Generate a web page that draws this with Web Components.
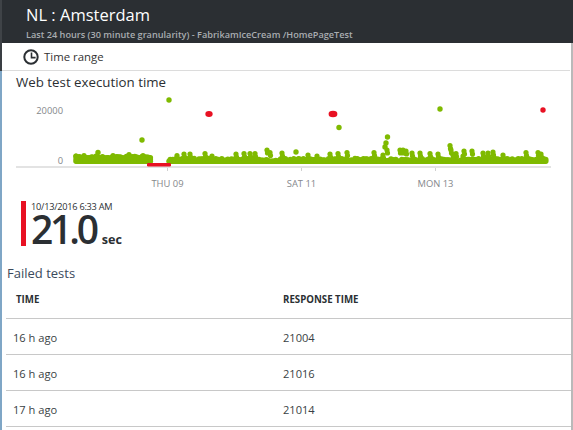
<!DOCTYPE html>
<html>
<head>
<meta charset="utf-8">
<style>
  html, body { margin: 0; height: 100%; overflow: hidden; background: #fff; }
  body { font-family: "Open Sans", "Noto Sans", sans-serif; color: #2b2f33; }
</style>
</head>
<body>
<test-blade>
  <blade-header slot="head" title-text="NL : Amsterdam" sub-text="Last 24 hours (30 minute granularity) - FabrikamIceCream /HomePageTest"></blade-header>
  <command-bar slot="bar" label="Time range"></command-bar>
  <execution-chart heading="Web test execution time"></execution-chart>
  <big-metric stamp="10/13/2016 6:33 AM" value="21.0" unit="sec"></big-metric>
  <failed-tests heading="Failed tests">
    <failed-row when="16 h ago" ms="21004"></failed-row>
    <failed-row when="16 h ago" ms="21016"></failed-row>
    <failed-row when="17 h ago" ms="21014"></failed-row>
  </failed-tests>
</test-blade>
<script>
(function () {
  'use strict';

  // small helper, every component sets its shadow markup once
  class Base extends HTMLElement {
    constructor() {
      super();
      this.attachShadow({ mode: 'open' });
    }
    a(name) { return this.getAttribute(name) || ''; }
  }

  class TestBlade extends Base {
    connectedCallback() {
      this.shadowRoot.innerHTML = `
        <style>
          :host { display: block; width: 573px; height: 430px; overflow: hidden; background: #fff; }
          .body { border-right: 2px solid #b9b9b9; height: 387px; overflow: hidden; }
          .rest { border-left: 2px solid #7fa6c6; height: 359px; overflow: hidden; }
        </style>
        <slot name="head"></slot>
        <div class="body">
          <slot name="bar"></slot>
          <div class="rest"><slot></slot></div>
        </div>`;
    }
  }

  class BladeHeader extends Base {
    connectedCallback() {
      this.shadowRoot.innerHTML = `
        <style>
          :host { display: flex; flex-direction: column; height: 43px; box-sizing: border-box; background: #2b2f33; border-left: 2px solid #3f4347; padding: 3px 0 0 24px; color: #fff; }
          .t { font-size: 16.5px; line-height: 24px; }
          .s { font-size: 9.17px; line-height: 13px; margin-top: 1px; font-weight: 600; color: #a9adb1; white-space: nowrap; }
        </style>
        <div class="t">${this.a('title-text')}</div>
        <div class="s">${this.a('sub-text')}</div>`;
    }
  }

  class CommandBar extends Base {
    connectedCallback() {
      this.shadowRoot.innerHTML = `
        <style>
          :host { display: flex; align-items: center; gap: 5px; height: 28px; box-sizing: border-box; margin-right: 1px; padding: 0 0 1px 21px; background: #fff; border-left: 2px solid #3a3f44; font-size: 11.4px; color: #333; position: relative; }
          :host::after { content: ""; position: absolute; left: 0; right: 0; bottom: 0; height: 1px; background: #dcdcdc; }
          svg { display: block; }
        </style>
        <svg width="16" height="16" viewBox="0 0 16 16">
          <circle cx="8" cy="8" r="6.7" fill="none" stroke="#2b2f33" stroke-width="2"/>
          <path d="M8.5 3.6V8.6H12.6" fill="none" stroke="#2b2f33" stroke-width="1.6"/>
        </svg>
        <span>${this.a('label')}</span>`;
    }
  }

  class ExecutionChart extends Base {
    connectedCallback() {
      this.shadowRoot.innerHTML = `
        <style>
          :host { display: block; height: 130px; }
          .h { font-size: 13.3px; line-height: 20px; padding: 1px 0 0 14px; height: 18px; color: #2b2f33; white-space: nowrap; }
          svg { display: block; }
          text { font-family: "Open Sans", "Noto Sans", sans-serif; font-size: 9.4px; fill: #85888c; }
        </style>
        <div class="h">${this.a('heading')}</div>
        <svg width="569" height="111" viewBox="2 90 569 111"></svg>`;
      this.draw(this.shadowRoot.querySelector('svg'));
    }

    draw(svg) {
      var GREEN = '#7fba00', RED = '#e81123';
      var out = '';
      var dot = function (x, y, r, c) {
        out += '<circle cx="' + x.toFixed(1) + '" cy="' + y.toFixed(1) + '" r="' + r + '" fill="' + (c || GREEN) + '"/>';
      };
      // fixed seed so the cloud is always the same
      var seed = 7;
      var rnd = function () {
        seed = (seed * 16807) % 2147483647;
        return seed / 2147483647;
      };
      var x;
      // left block is taller than the rest
      for (x = 76; x < 151; x += 1.2) {
        dot(x, 161.3, 2.7);
        dot(x, 159, 2.7);
        dot(x, 156.3 + rnd() * 2.4, 2.7);
      }
      for (x = 169; x < 546; x += 1.2) {
        dot(x, 161.3, 2.7);
        if (rnd() > 0.25) dot(x, 158.5 + rnd() * 2, 2.7);
      }
      // bumps on top of the cloud, read off the reference
      [[76, 156], [84, 155.5], [113, 155.5], [129, 154.5], [143, 155.5], [177, 155.5], [184, 154], [190, 154],
       [205, 153.5], [212, 156], [236, 154], [244, 153.5], [250, 153.5], [255, 153.5], [267, 150], [270, 152.5], [282, 153],
       [308, 155], [317, 156], [330, 154], [338, 153.5], [347, 152.5], [374, 152.5], [387, 150], [383, 155], [400, 150],
       [403, 150], [406, 151], [412, 153], [420, 153], [430, 153.5], [438, 154], [456, 153.5], [450, 145.5], [451, 150],
       [453, 155], [464, 151], [463, 156], [472, 151], [483, 153], [493, 152], [488, 153], [503, 155], [526, 152.5], [538, 152.5],
       [541, 154], [96, 156]].forEach(function (p) {
        dot(p[0], p[1], 2.6);
        dot(p[0] + 0.5, p[1] + 3, 2.6);
      });
      // outliers
      [[169, 100], [142, 140], [98, 152.5], [296, 152], [339, 127.5], [440, 109], [387.5, 137], [386, 143], [385, 147]].forEach(function (p) {
        dot(p[0], p[1], 2.7);
      });

      var axis =
        '<rect x="16" y="166" width="535" height="2" fill="#e3e3e3"/>' +
        '<rect x="167" y="168" width="1" height="3" fill="#d0d0d0"/>' +
        '<rect x="301" y="168" width="1" height="3" fill="#d0d0d0"/>' +
        '<rect x="435" y="168" width="1" height="3" fill="#d0d0d0"/>';

      var failed =
        '<rect x="147" y="163" width="24" height="3.4" rx="1.2" fill="' + RED + '"/>' +
        '<ellipse cx="209" cy="114" rx="3.7" ry="2.9" fill="' + RED + '"/>' +
        '<ellipse cx="333" cy="114" rx="4.4" ry="3.2" fill="' + RED + '"/>' +
        '<circle cx="543" cy="110" r="2.7" fill="' + RED + '"/>';

      var labels =
        '<text x="63" y="114" text-anchor="end">20000</text>' +
        '<text x="63" y="164" text-anchor="end">0</text>' +
        '<text x="167.5" y="187" text-anchor="middle">THU 09</text>' +
        '<text x="301.5" y="187" text-anchor="middle">SAT 11</text>' +
        '<text x="435.5" y="187" text-anchor="middle">MON 13</text>';

      svg.innerHTML = axis + out + failed + labels;
    }
  }

  class BigMetric extends Base {
    connectedCallback() {
      this.shadowRoot.innerHTML = `
        <style>
          :host { display: flex; height: 45px; margin: 0 0 0 19px; gap: 5px; }
          .bar { width: 5px; height: 45px; background: #e81123; flex: none; }
          .d { font-size: 9.2px; line-height: 12px; letter-spacing: -0.25px; color: #2b2f33; white-space: nowrap; }
          .v { display: flex; align-items: baseline; gap: 6px; line-height: 32px; color: #2b2f33; }
          .n { font-size: 39px; font-weight: 600; letter-spacing: -3.2px; }
          .u { font-size: 12.6px; font-weight: 700; }
        </style>
        <div class="bar"></div>
        <div>
          <div class="d">${this.a('stamp')}</div>
          <div class="v"><span class="n">${this.a('value')}</span><span class="u">${this.a('unit')}</span></div>
        </div>`;
    }
  }

  class FailedTests extends Base {
    connectedCallback() {
      this.shadowRoot.innerHTML = `
        <style>
          :host { display: block; margin-top: 18px; }
          .h { font-size: 13px; line-height: 18px; padding-left: 5px; color: #3b4a5c; }
          .cols { display: grid; grid-template-columns: 267px 1fr; margin: 12px 0 0 4px; height: 24px; padding-left: 10px; font-size: 9.7px; line-height: 12px; font-weight: 700; color: #2b2f33; border-bottom: 1px solid #c8c8c8; }
        </style>
        <div class="h">${this.a('heading')}</div>
        <div class="cols"><span>TIME</span><span>RESPONSE TIME</span></div>
        <slot></slot>`;
    }
  }

  class FailedRow extends Base {
    connectedCallback() {
      this.shadowRoot.innerHTML = `
        <style>
          :host { display: grid; grid-template-columns: 270px 1fr; align-items: center; height: 35px; box-sizing: content-box; margin-left: 4px; padding: 0 0 0 7px; border-bottom: 1px solid #c8c8c8; font-size: 11.1px; color: #3a3f44; }
          span { padding-top: 1px; }
        </style>
        <span>${this.a('when')}</span><span>${this.a('ms')}</span>`;
    }
  }

  customElements.define('test-blade', TestBlade);
  customElements.define('blade-header', BladeHeader);
  customElements.define('command-bar', CommandBar);
  customElements.define('execution-chart', ExecutionChart);
  customElements.define('big-metric', BigMetric);
  customElements.define('failed-tests', FailedTests);
  customElements.define('failed-row', FailedRow);
})();
</script>
</body>
</html>
